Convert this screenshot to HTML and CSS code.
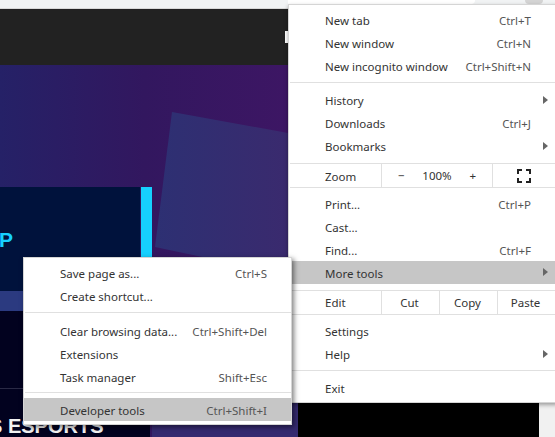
FILE: index.html
```html
<!DOCTYPE html>
<html lang="en">
<head>
  <meta charset="UTF-8" />
  <title>More tools menu</title>
  <link rel="stylesheet" href="styles.css">
</head>
<body>
  <div class="toolbar">
    <div class="addressBar"></div>
    <div class="avatar"></div>
  </div>
  <div class="navbar"><div class="navMark"></div></div>

  <svg class="hero" width="555" height="372" viewBox="0 0 555 372">
    <defs>
      <linearGradient id="heroBg" x1="0" y1="0" x2="1" y2="0">
        <stop offset="0" stop-color="#252167" />
        <stop offset="0.5" stop-color="#32175f" />
        <stop offset="1" stop-color="#3d1664" />
      </linearGradient>
      <linearGradient id="square" x1="0" y1="0" x2="1" y2="0">
        <stop offset="0" stop-color="#2d3073" />
        <stop offset="1" stop-color="#3a2a6e" />
      </linearGradient>
    </defs>
    <rect width="288" height="372" fill="url(#heroBg)" />
    <polygon points="172,47 288,68 288,210 155,182" fill="url(#square)" />
    <rect x="0" y="122" width="140" height="250" fill="#00123c" />
    <rect x="141" y="122" width="11" height="100" fill="#16d0ff" />
    <rect x="152" y="230" width="146" height="142" fill="#352a70" />
    <rect x="0" y="226" width="150" height="20" fill="#2b3a80" />
    <rect x="0" y="246" width="150" height="126" fill="#02021f" />
    <rect x="0" y="323" width="150" height="1" fill="#2a2a45" />
    <rect x="298" y="338" width="241" height="34" fill="#000" />
    <rect x="539" y="338" width="16" height="34" fill="#f1f1f1" />
    <text class="heroLetter" x="-1" y="182">P</text>
    <text class="heroTitle" x="-11" y="368">S ESPORTS</text>
  </svg>

  <div class="menu mainMenu">
    <div class="item"><span>New tab</span><span class="keys">Ctrl+T</span></div>
    <div class="item"><span>New window</span><span class="keys">Ctrl+N</span></div>
    <div class="item"><span>New incognito window</span><span class="keys">Ctrl+Shift+N</span></div>
    <div class="sep sepHistory"></div>
    <div class="item arrow"><span>History</span></div>
    <div class="item"><span>Downloads</span><span class="keys">Ctrl+J</span></div>
    <div class="item arrow"><span>Bookmarks</span></div>
    <div class="sep sepZoom"></div>
    <div class="cells">
      <div class="cellLabel zoomLabel">Zoom</div>
      <div class="zoomCell"><span>−</span><span>100%</span><span>+</span></div>
      <div class="fullCell">
        <svg width="14" height="14" viewBox="0 0 14 14" fill="none" stroke="#222" stroke-width="2">
          <path d="M1 5V1H5M9 1H13V5M13 9V13H9M5 13H1V9" />
        </svg>
      </div>
    </div>
    <div class="sep sepTight"></div>
    <div class="item first"><span>Print...</span><span class="keys">Ctrl+P</span></div>
    <div class="item"><span>Cast...</span></div>
    <div class="item"><span>Find...</span><span class="keys">Ctrl+F</span></div>
    <div class="item arrow active"><span>More tools</span></div>
    <div class="sep sepEdit"></div>
    <div class="cells">
      <div class="cellLabel">Edit</div>
      <div class="editCell">Cut</div>
      <div class="editCell">Copy</div>
      <div class="editCell">Paste</div>
    </div>
    <div class="sep sepTight"></div>
    <div class="item settings"><span>Settings</span></div>
    <div class="item arrow"><span>Help</span></div>
    <div class="sep sepExit"></div>
    <div class="item"><span>Exit</span></div>
  </div>

  <div class="menu subMenu">
    <div class="item"><span>Save page as...</span><span class="keys">Ctrl+S</span></div>
    <div class="item"><span>Create shortcut...</span></div>
    <div class="sep sepClear"></div>
    <div class="item"><span>Clear browsing data...</span><span class="keys">Ctrl+Shift+Del</span></div>
    <div class="item"><span>Extensions</span></div>
    <div class="item"><span>Task manager</span><span class="keys">Shift+Esc</span></div>
    <div class="sep sepDev"></div>
    <div class="item active"><span>Developer tools</span><span class="keys">Ctrl+Shift+I</span></div>
  </div>
</body>
</html>
```

FILE: styles.css
```css
body {
  margin: 0;
  width: 555px;
  height: 437px;
  overflow: hidden;
  position: relative;
  background: #f1f1f1;
  font-family: "Noto Sans", Arial, sans-serif;
  font-size: 11.5px;
  color: #333;
}

.toolbar {
  display: flex;
  height: 8px;
  background: #f1f3f4;
  border-bottom: 1px solid #d8d8d8;
}
.addressBar {
  width: 187px;
  height: 4px;
  margin-left: 288px;
  background: #fff;
  border-radius: 0 0 8px 0;
}
.avatar {
  width: 18px;
  height: 4px;
  margin-left: 50px;
  background: #d4d4d4;
  border-radius: 0 0 9px 9px;
}

.navbar {
  display: flex;
  justify-content: flex-end;
  align-items: flex-start;
  height: 56px;
  width: 288px;
  background: #222;
}
.navMark {
  width: 3px;
  height: 12px;
  margin-top: 22px;
  background: #fff;
}

.hero {
  display: block;
}
.heroLetter {
  font-family: "Liberation Sans", Arial, sans-serif;
  font-weight: 700;
  font-size: 21px;
  fill: #16d0ff;
}
.heroTitle {
  font-family: "Liberation Sans", Arial, sans-serif;
  font-weight: 700;
  font-size: 20px;
  fill: #f2f2f2;
}

.menu {
  position: absolute;
  box-sizing: border-box;
  background: #fff;
  border: 1px solid #d5d5d5;
}
.mainMenu {
  left: 288px;
  top: 4px;
  width: 270px;
  height: 399px;
  padding-top: 4px;
  box-shadow: 0 2px 4px rgba(0, 0, 0, 0.35);
}
.subMenu {
  left: 23px;
  top: 257px;
  width: 269px;
  height: 168px;
  padding-top: 4px;
  box-shadow: 2px 2px 5px rgba(0, 0, 0, 0.5);
}

.item {
  display: flex;
  box-sizing: border-box;
  justify-content: space-between;
  align-items: center;
  height: 23px;
  line-height: 23px;
  padding: 0 24px 0 36px;
  position: relative;
}
.mainMenu .item {
  padding-right: 26px;
}
.mainMenu .item.arrow::after {
  content: "";
  position: absolute;
  left: 254px;
  top: 7px;
  border-left: 5px solid #666;
  border-top: 4px solid transparent;
  border-bottom: 4px solid transparent;
}
.item.active {
  background: #c6c6c6;
  padding-top: 2px;
}
.mainMenu .item.active {
  margin-top: -1px;
}
.keys {
  color: #555;
}

.sep {
  height: 1px;
  margin-left: 1px;
  background: #e0e0e0;
}
.sepHistory { margin-top: 4px; margin-bottom: 6px; }
.sepZoom { margin-top: 5px; }
.sepTight { margin-top: 0; }
.sepEdit { margin-top: 6px; }
.sepExit { margin-top: 4px; margin-bottom: 6px; }
.sepClear { margin-top: 4px; margin-bottom: 7px; }
.sepDev { margin-top: 3px; margin-bottom: 5px; }
.item.first { margin-top: 5px; }
.item.settings { margin-top: 5px; }

.cells {
  display: flex;
  height: 23px;
  line-height: 23px;
}
.cellLabel {
  box-sizing: border-box;
  width: 92px;
  padding-left: 36px;
}
.zoomLabel {
  padding-top: 1px;
}
.zoomCell {
  box-sizing: border-box;
  display: flex;
  justify-content: space-between;
  width: 112px;
  padding: 0 16px;
  border-left: 1px solid #e0e0e0;
  border-right: 1px solid #e0e0e0;
}
.fullCell {
  display: flex;
  align-items: center;
  padding-left: 24px;
}
.editCell {
  box-sizing: border-box;
  width: 58px;
  padding-right: 2px;
  text-align: center;
  border-left: 1px solid #e0e0e0;
}
```
